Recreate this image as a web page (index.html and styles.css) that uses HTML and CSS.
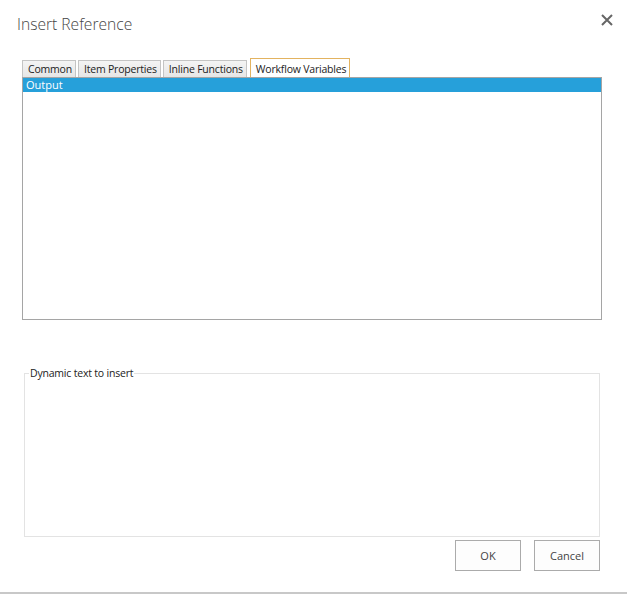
FILE: index.html
```html
<!DOCTYPE html>
<html>
<head>
<meta charset="utf-8">
<link rel="stylesheet" href="styles.css">
</head>
<body>
<div class="dialog">
  <div class="header">
    <h1 class="title">Insert Reference</h1>
    <button class="close" aria-label="Close">
      <svg width="12" height="12" viewBox="0 0 12 12"><path d="M1 1L11 11M11 1L1 11" stroke="#666" stroke-width="2" fill="none"/></svg>
    </button>
  </div>
  <div class="tabs">
    <div class="tab">Common</div>
    <div class="tab">Item Properties</div>
    <div class="tab">Inline Functions</div>
    <div class="tab active">Workflow Variables</div>
  </div>
  <div class="list">
    <div class="item selected">Output</div>
  </div>
  <fieldset class="dyn">
    <legend>Dynamic text to insert</legend>
  </fieldset>
  <div class="buttons">
    <button class="btn">OK</button>
    <button class="btn">Cancel</button>
  </div>
  <div class="footer-line"></div>
</div>
</body>
</html>
```
FILE: styles.css
```css
html, body {
  margin: 0;
  padding: 0;
  background: #fff;
}
body {
  font-family: "Open Sans", "Noto Sans", sans-serif;
  color: #333;
  width: 627px;
  height: 594px;
  overflow: hidden;
}
.dialog {
  display: flex;
  flex-direction: column;
  height: 594px;
}
.header {
  display: flex;
  justify-content: space-between;
  align-items: flex-start;
  height: 58px;
}
.title {
  margin: 12px 0 0 17px;
  font-size: 15.6px;
  font-weight: 300;
  color: #444;
  line-height: 25px;
}
.close {
  margin: 14px 14px 0 0;
  padding: 0;
  border: 0;
  background: none;
  width: 12px;
  height: 12px;
  display: block;
}
.close svg { display: block; }
.tabs {
  display: flex;
  gap: 2px;
  margin-left: 22px;
  align-items: flex-end;
  height: 19px;
}
.tab {
  height: 17px;
  box-sizing: border-box;
  border: 1px solid #c4c4c4;
  border-bottom: 0;
  background: linear-gradient(#f4f4f4, #e6e6e6);
  font-size: 10.5px;
  line-height: 16px;
  padding: 0 3px 0 5px;
  color: #222;
  letter-spacing: -0.2px;
}
.tab.active {
  height: 19px;
  background: #fff;
  border-color: #e3b360;
  line-height: 20px;
  margin-left: 1px;
}
.list {
  margin-left: 22px;
  width: 580px;
  height: 243px;
  box-sizing: border-box;
  border: 1px solid #a5a5a5;
}
.item {
  height: 14px;
  font-size: 11px;
  line-height: 14px;
  padding-left: 3px;
}
.item.selected {
  background: #26a0da;
  color: #fff;
}
.dyn {
  margin: 47px 0 0 24px;
  width: 576px;
  height: 170px;
  box-sizing: border-box;
  border: 1px solid #e3e3e3;
  padding: 0;
}
.dyn legend {
  font-size: 10.5px;
  color: #222;
  padding: 0 1px;
  margin-left: 4px;
  line-height: 13px;
  letter-spacing: -0.2px;
}
.buttons {
  display: flex;
  gap: 13px;
  justify-content: flex-end;
  margin: 3px 27px 0 0;
}
.btn {
  width: 66px;
  height: 31px;
  border: 1px solid #ababab;
  background: #fdfdfd;
  font-family: "Open Sans", "Noto Sans", sans-serif;
  font-size: 11px;
  color: #444;
  padding: 0;
}
.footer-line {
  margin-top: auto;
  height: 2px;
  background: #c8c8c8;
}
```
